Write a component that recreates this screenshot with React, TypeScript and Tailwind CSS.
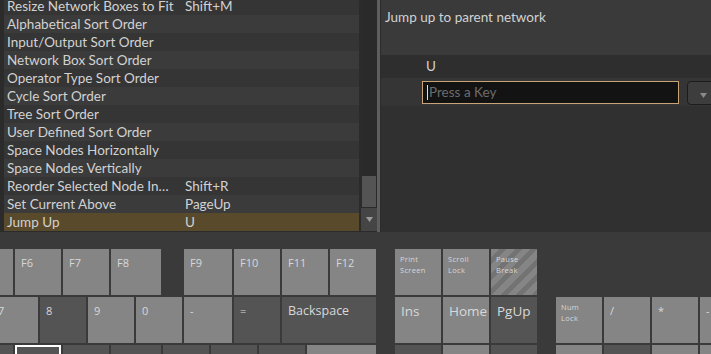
import { ReactNode } from "react";

const rows: [string, string][] = [
  ["Resize Network Boxes to Fit", "Shift+M"],
  ["Alphabetical Sort Order", ""],
  ["Input/Output Sort Order", ""],
  ["Network Box Sort Order", ""],
  ["Operator Type Sort Order", ""],
  ["Cycle Sort Order", ""],
  ["Tree Sort Order", ""],
  ["User Defined Sort Order", ""],
  ["Space Nodes Horizontally", ""],
  ["Space Nodes Vertically", ""],
  ["Reorder Selected Node In…", "Shift+R"],
  ["Set Current Above", "PageUp"],
  ["Jump Up", "U"],
];

type KeyProps = {
  w: string;
  dark?: boolean;
  selected?: boolean;
  striped?: boolean;
  big?: boolean;
  small?: boolean;
  children?: ReactNode;
};

function Key({ w, dark, selected, striped, big, small, children }: KeyProps) {
  const bg = dark ? "bg-[#545454]" : "bg-[#858585]";
  return (
    <div
      className={`${w} h-[46px] shrink-0 overflow-hidden ${bg} ${selected ? "border-2 border-white" : ""} text-[#d8d8d8] ${
        small
          ? "pl-[5px] pt-[5px] text-[7.5px] leading-[11px] tracking-[0.3px]"
          : big
          ? "pl-[6px] pt-[4px] text-[13.5px] leading-[20px]"
          : "pl-[6px] pt-[6px] text-[11px] leading-[16px]"
      }`}
      style={
        striped
          ? {
              backgroundImage:
                "repeating-linear-gradient(135deg, #858585 0px, #858585 6px, #737373 6px, #737373 11px)",
            }
          : undefined
      }
    >
      {children}
    </div>
  );
}

export default function App() {
  return (
    <div className="w-[711px] h-[354px] overflow-hidden bg-[#3a3a3a] font-['Lato','Noto_Sans',sans-serif] text-[#d2d2d2]">
      {/* top half */}
      <div className="flex h-[232px]">
        <div className="flex shrink-0 w-[377px] bg-[#2b2b2b] pl-[4px] pb-[1px]">
          <div className="w-[355px] -mt-[3px] overflow-hidden">
            {rows.map(([name, key], i) => {
              const last = i === rows.length - 1;
              const bg = last ? "bg-[#5a4a2c]" : i % 2 === 1 ? "bg-[#3b3b3b]" : "bg-[#353535]";
              return (
                <div key={name} className={`flex items-center h-[18px] ${bg} text-[13.5px] pl-[3px]`}>
                  <span className="w-[178px] whitespace-nowrap">{name}</span>
                  <span>{key}</span>
                </div>
              );
            })}
          </div>
          <div className="ml-[2px] w-[16px] flex flex-col bg-[#2a2a2a]">
            <div className="flex-1" />
            <div className="h-[31px] mx-[1px] bg-[#545454]" />
            <div className="h-[23px] mt-[1px] bg-[#454545] flex items-center justify-center">
              <svg width="7" height="5" viewBox="0 0 7 5">
                <polygon points="0,0 7,0 3.5,5" fill="#9a9a9a" />
              </svg>
            </div>
          </div>
        </div>
        <div className="w-[3px] shrink-0 bg-[#5e5e5e]" />
        <div className="w-[1px] shrink-0 bg-[#2c2c2c]" />
        <div className="flex-1 min-w-0 overflow-hidden flex flex-col bg-[#303030]">
          <div className="h-[55px] bg-[#3a3a3a] pl-[4px] pt-[7px] text-[13.5px]">Jump up to parent network</div>
          <div className="h-[23px] flex items-center pl-[45px] text-[13.5px] bg-[#2e2e2e]">U</div>
          <div className="h-[28px] flex items-center pl-[41px] bg-[#353535]">
            <div className="w-[257px] shrink-0 h-[23px] border border-[#c9a477] bg-[#131313] flex items-center pl-[4px] text-[13.5px] text-[#6c6c6c]">
              <span className="w-[1px] h-[15px] bg-[#e0e0e0] mr-[1px]" />
              Press a Key
            </div>
            <div className="ml-[8px] shrink-0 w-[30px] h-[24px] mt-[2px] rounded-[4px] border border-[#1c1c1c] bg-[#3d3d3d] flex items-end justify-end pr-[9px] pb-[6px]">
              <svg width="7" height="5" viewBox="0 0 7 5">
                <polygon points="0,0 7,0 3.5,5" fill="#8a8a8a" />
              </svg>
            </div>
          </div>
          <div className="flex-1" />
        </div>
      </div>

      {/* keyboard */}
      <div className="flex mt-[17px] font-['Open_Sans','Noto_Sans',sans-serif]">
        <div className="w-[376px] shrink-0 flex flex-col gap-[2px]">
          <div className="flex gap-[2px]">
            <Key w="w-[13px]" />
            <Key w="w-[46px]">F6</Key>
            <Key w="w-[46px]">F7</Key>
            <Key w="w-[50px]">F8</Key>
            <div className="w-[19px] shrink-0" />
            <Key w="w-[48px]">F9</Key>
            <Key w="w-[46px]">F10</Key>
            <Key w="w-[46px]">F11</Key>
            <Key w="w-[46px]">F12</Key>
          </div>
          <div className="flex gap-[2px]">
            <Key w="w-[38px]">
              <span className="block -ml-[8px]">7</span>
            </Key>
            <Key w="w-[46px]" dark>
              8
            </Key>
            <Key w="w-[46px]">9</Key>
            <Key w="w-[46px]">0</Key>
            <Key w="w-[48px]">-</Key>
            <Key w="w-[46px]" dark>
              =
            </Key>
            <Key w="w-[94px]" dark>
              <span className="text-[12.5px]">Backspace</span>
            </Key>
          </div>
          <div className="flex gap-[2px]">
            <Key w="w-[13px]" dark />
            <Key w="w-[46px]" dark selected />
            <Key w="w-[46px]" dark />
            <Key w="w-[50px]" dark />
            <Key w="w-[46px]" dark />
            <Key w="w-[46px]" dark />
            <Key w="w-[46px]" dark />
            <Key w="w-[69px]" />
          </div>
        </div>
        <div className="ml-[19px] shrink-0 w-[142px] flex flex-col gap-[2px]">
          <div className="flex gap-[2px]">
            <Key w="w-[46px]" small>
              Print
              <br />
              Screen
            </Key>
            <Key w="w-[46px]" small>
              Scroll
              <br />
              Lock
            </Key>
            <Key w="w-[46px]" small striped>
              Pause
              <br />
              Break
            </Key>
          </div>
          <div className="flex gap-[2px]">
            <Key w="w-[46px]" big>
              Ins
            </Key>
            <Key w="w-[46px]" big>
              Home
            </Key>
            <Key w="w-[46px]" big dark>
              PgUp
            </Key>
          </div>
          <div className="flex gap-[2px]">
            <Key w="w-[46px]" dark />
            <Key w="w-[46px]" />
            <Key w="w-[46px]" dark />
          </div>
        </div>
        <div className="ml-[19px] shrink-0 flex flex-col gap-[2px]">
          <div className="h-[46px]" />
          <div className="flex gap-[2px]">
            <Key w="w-[46px]" small>
              Num
              <br />
              Lock
            </Key>
            <Key w="w-[46px]">/</Key>
            <Key w="w-[46px]">*</Key>
            <Key w="w-[46px]">-</Key>
          </div>
          <div className="flex gap-[2px]">
            <Key w="w-[46px]" />
            <Key w="w-[46px]" dark />
            <Key w="w-[46px]" />
            <Key w="w-[46px]" />
          </div>
        </div>
      </div>
    </div>
  );
}
